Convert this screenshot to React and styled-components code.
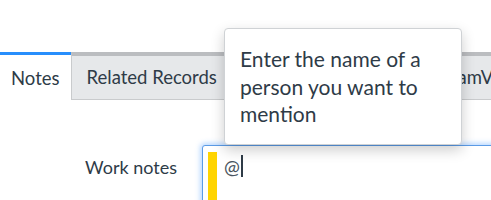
import styled, { createGlobalStyle } from 'styled-components';

const GlobalStyle = createGlobalStyle`
  html, body {
    margin: 0;
    padding: 0;
    background: #ffffff;
    overflow: hidden;
  }
  body {
    font-family: "Source Sans Pro", Lato, "Open Sans", sans-serif;
    color: #2e3b47;
  }
`;

const Page = styled.div`
  position: relative;
  width: 491px;
  height: 200px;
  padding-top: 52px;
  box-sizing: border-box;
  overflow: hidden;
`;

const TabBar = styled.div`
  display: flex;
  white-space: nowrap;
`;

const Tab = styled.div`
  box-sizing: border-box;
  height: 48px;
  display: flex;
  align-items: center;
  padding: 0 ${(p) => p.$pad || 15}px;
  font-size: 18.5px;
  flex-shrink: 0;
  background: ${(p) => (p.$active ? '#ffffff' : '#e6e8ea')};
  border-top: ${(p) => (p.$active ? '3px solid #278efc' : '4px solid #bbbdc0')};
  border-left: ${(p) => (p.$active ? 'none' : '1px solid #c9cbcd')};
  border-bottom: ${(p) => (p.$active ? 'none' : '1px solid #c9cbcd')};
  padding-bottom: ${(p) => (p.$active ? 0 : 2)}px;
`;

const FormRow = styled.div`
  display: flex;
  align-items: flex-start;
  margin-top: 45px;
`;

const Label = styled.div`
  width: 177px;
  flex-shrink: 0;
  text-align: right;
  font-size: 18px;
  padding-top: 11px;
`;

const InputBox = styled.div`
  margin-left: 25px;
  flex: 1;
  min-width: 400px;
  height: 70px;
  box-sizing: border-box;
  display: flex;
  align-items: flex-start;
  gap: 7px;
  padding: 6px 0 0 5px;
  border: 1px solid #5b9be6;
  border-radius: 3px;
  background: #ffffff;
  box-shadow: 0 0 5px 2px rgba(102, 170, 255, 0.45);
`;

const WorkNoteBar = styled.div`
  width: 9px;
  height: 60px;
  background: #ffd400;
  flex-shrink: 0;
`;

const Typed = styled.div`
  display: flex;
  align-items: center;
  font-size: 19px;
  color: #4a5560;
  height: 26px;
  margin-top: 1px;
`;

const Caret = styled.span`
  display: inline-block;
  width: 2px;
  height: 22px;
  background: #2e3b47;
  margin-left: 1px;
`;

const Popover = styled.div`
  position: absolute;
  left: 224px;
  top: 28px;
  width: 238px;
  height: 117px;
  box-sizing: border-box;
  padding: 16px 10px 0 15px;
  background: #ffffff;
  border: 1px solid #cfd2d5;
  border-radius: 4px;
  box-shadow: 0 5px 14px rgba(0, 0, 0, 0.2);
  font-size: 21px;
  line-height: 27.5px;
  color: #2e3b47;
`;

export default function App() {
  return (
    <>
      <GlobalStyle />
      <Page>
        <TabBar>
          <Tab $active $pad={11}>Notes</Tab>
          <Tab>Related Records</Tab>
          <Tab>Child Incidents (10)</Tab>
          <Tab $pad={19}>TeamView</Tab>
        </TabBar>
        <FormRow>
          <Label>Work notes</Label>
          <InputBox>
            <WorkNoteBar />
            <Typed>
              @<Caret />
            </Typed>
          </InputBox>
        </FormRow>
        <Popover>Enter the name of a person you want to mention</Popover>
      </Page>
    </>
  );
}
